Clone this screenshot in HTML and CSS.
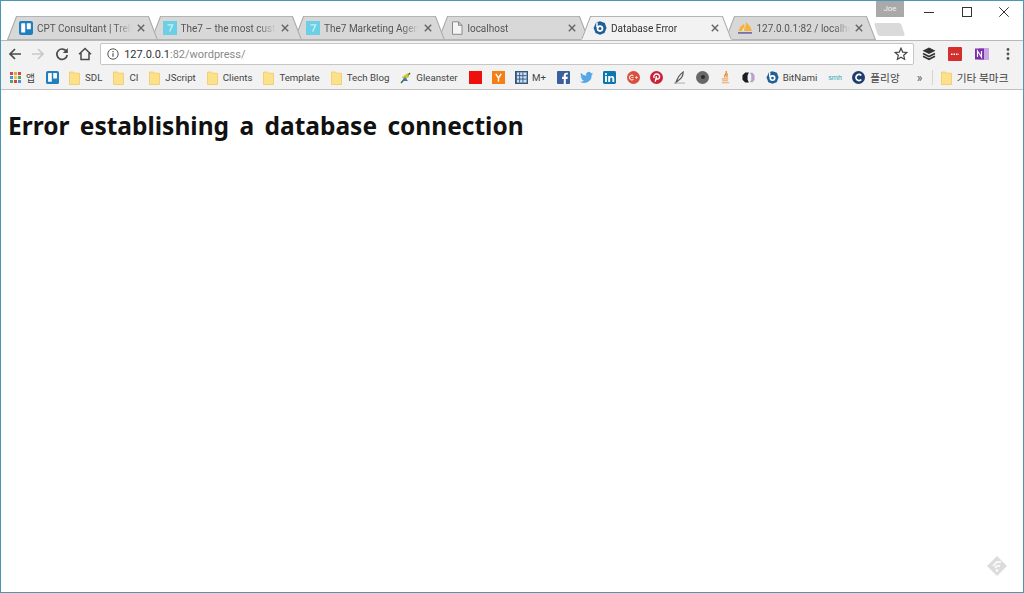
FILE: index.html
```html
<!DOCTYPE html>
<html lang="ko">
<head>
<meta charset="utf-8">
<title>Database Error</title>
<link rel="stylesheet" href="styles.css">
</head>
<body>
<svg class="defs" width="0" height="0" aria-hidden="true">
  <defs>
    <symbol id="trello" viewBox="0 0 14 14"><rect width="14" height="14" rx="2" fill="#1f7fbf"/><rect x="2.2" y="2.2" width="4" height="9.4" rx=".6" fill="#fff"/><rect x="7.8" y="2.2" width="4" height="6" rx=".6" fill="#fff"/></symbol>
    <symbol id="seven" viewBox="0 0 14 14"><rect width="14" height="14" fill="#6bd0e6"/><path d="M4.5 3.8h5.2L6.6 10.6" fill="none" stroke="#c9f0f8" stroke-width="1.300"/></symbol>
    <symbol id="doc" viewBox="0 0 14 14"><path d="M2.5.8h6l3.5 3.5v9h-9.500zM8.500.8v3.500H12" fill="#f4f4f4" stroke="#8a8a8a"/></symbol>
    <symbol id="bitnami" viewBox="0 0 14 14"><path d="M3.200 1.300 7 .3l4.800 1.600L13.500 7l-2 5-4.500 1.700L2.500 12 .6 7z" fill="#1d5f96"/><circle cx="7" cy="7.600" r="3.300" fill="#fff"/><circle cx="7" cy="7.600" r="1.500" fill="#1d5f96"/><rect x="3.200" y="1.300" width="1.500" height="5" fill="#fff"/></symbol>
    <symbol id="folder" viewBox="0 0 11 14"><path d="M.5 1h4l1 1.200h5V13.500H.5z" fill="#fde08a" stroke="#f0ca62" stroke-width=".8"/></symbol>
    <symbol id="pma" viewBox="0 0 16 14"><path d="M1.500 10C2.500 6 5 4 7 3l1 7zM8 10l1-9c2 2 5 5 6 9z" fill="#f6b23e"/><path d="M5 10c.5-1.500 1-2.500 2-3.500V10z" fill="#fce6a8"/><path d="M1 11h14v1.800H1z" fill="#7a6fa8"/></symbol>
  </defs>
</svg>

<div class="window">
  <header class="strip">
    <nav class="tabs">
      <div class="tab">
        <svg class="fav"><use href="#trello"/></svg>
        <span class="title">CPT Consultant | Trello</span>
        <svg class="close" viewBox="0 0 10 10"><path d="M1 1l8 8M9 1l-8 8"/></svg>
      </div>
      <div class="tab">
        <svg class="fav"><use href="#seven"/></svg>
        <span class="title">The7 – the most custom</span>
        <svg class="close" viewBox="0 0 10 10"><path d="M1 1l8 8M9 1l-8 8"/></svg>
      </div>
      <div class="tab">
        <svg class="fav"><use href="#seven"/></svg>
        <span class="title">The7 Marketing Agen</span>
        <svg class="close" viewBox="0 0 10 10"><path d="M1 1l8 8M9 1l-8 8"/></svg>
      </div>
      <div class="tab">
        <svg class="fav"><use href="#doc"/></svg>
        <span class="title">localhost</span>
        <svg class="close" viewBox="0 0 10 10"><path d="M1 1l8 8M9 1l-8 8"/></svg>
      </div>
      <div class="tab active">
        <svg class="fav"><use href="#bitnami"/></svg>
        <span class="title">Database Error</span>
        <svg class="close" viewBox="0 0 10 10"><path d="M1 1l8 8M9 1l-8 8"/></svg>
      </div>
      <div class="tab">
        <svg class="fav wide"><use href="#pma"/></svg>
        <span class="title">127.0.0.1:82 / localho</span>
        <svg class="close" viewBox="0 0 10 10"><path d="M1 1l8 8M9 1l-8 8"/></svg>
      </div>
    </nav>
    <div class="profile-col">
      <div class="profile">Joe</div>
      <div class="newtab"></div>
    </div>
    <div class="caption">
      <svg viewBox="0 0 10 10"><path d="M0 5.500h10"/></svg>
      <svg viewBox="0 0 10 10"><rect x=".5" y=".5" width="9" height="9"/></svg>
      <svg viewBox="0 0 10 10"><path d="M.3.3l9.400 9.400M9.700.3L.3 9.700"/></svg>
    </div>
  </header>

  <div class="toolbar">
    <svg class="nav" viewBox="0 0 14 14"><path d="M13 7H2.500M7 2L2 7l5 5" fill="none" stroke="#4a4a4a" stroke-width="1.700"/></svg>
    <svg class="nav" viewBox="0 0 14 14"><path d="M1 7h10.500M7 2l5 5-5 5" fill="none" stroke="#c9c9c9" stroke-width="1.700"/></svg>
    <svg class="nav" viewBox="0 0 14 14"><path d="M11.500 4.500A5.200 5.200 0 1 0 12.200 8" fill="none" stroke="#4a4a4a" stroke-width="1.700"/><path d="M12.800 1v5h-5z" fill="#4a4a4a"/></svg>
    <svg class="nav" viewBox="0 0 14 14"><path d="M1 7.300L7 1.500l6 5.800M3 6v6.500h8V6" fill="none" stroke="#4a4a4a" stroke-width="1.500"/></svg>
    <div class="omnibox">
      <svg class="info" viewBox="0 0 12 12"><circle cx="6" cy="6" r="5.200" fill="none" stroke="#555" stroke-width="1"/><path d="M6 5.200v3.600M6 3v1.200" stroke="#555" stroke-width="1.200"/></svg>
      <span class="url"><b>127.0.0.1</b>:82/wordpress/</span>
      <svg class="star" viewBox="0 0 14 14"><path d="M7 1.200l1.700 3.900 4.200.4-3.200 2.800.950 4.100L7 10.300l-3.650 2.100.950-4.100L1.100 5.500l4.200-.4z" fill="none" stroke="#444" stroke-width="1.200"/></svg>
    </div>
    <div class="extensions">
      <svg viewBox="0 0 14 14"><path d="M7 .5l6.500 3.200L7 7 .5 3.700z" fill="#333"/><path d="M1 6.500L7 9.500l6-3M1 9.300L7 12.300l6-3" fill="none" stroke="#333" stroke-width="1.600"/></svg>
      <svg viewBox="0 0 14 14"><rect width="14" height="14" rx="1" fill="#d22f2f"/><path d="M3 7.300h8" stroke="#fff" stroke-width="1.500" stroke-dasharray="1.500 1"/></svg>
      <svg viewBox="0 0 14 14"><rect x="4" y="1" width="10" height="12" fill="#c9a6e4"/><rect y="1.500" width="9" height="11" fill="#7b2fa8"/><path d="M2.500 10V4l4 6V4" fill="none" stroke="#fff" stroke-width="1.200"/></svg>
      <svg viewBox="0 0 14 14"><circle cx="7" cy="2.500" r="1.400" fill="#555"/><circle cx="7" cy="7" r="1.400" fill="#555"/><circle cx="7" cy="11.500" r="1.400" fill="#555"/></svg>
    </div>
  </div>

  <div class="bookmarks">
    <div class="bm">
      <svg class="ic11" viewBox="0 0 11 11"><g><rect width="3" height="3" fill="#d9453a"/><rect x="4" width="3" height="3" fill="#e8a33d"/><rect x="8" width="3" height="3" fill="#d9453a"/><rect y="4" width="3" height="3" fill="#4a8fdc"/><rect x="4" y="4" width="3" height="3" fill="#e8c33d"/><rect x="8" y="4" width="3" height="3" fill="#4eaa5c"/><rect y="8" width="3" height="3" fill="#4eaa5c"/><rect x="4" y="8" width="3" height="3" fill="#d9453a"/><rect x="8" y="8" width="3" height="3" fill="#4a8fdc"/></g></svg>
      <span>앱</span>
    </div>
    <div class="bm"><svg class="ic"><use href="#trello"/></svg></div>
    <div class="bm"><svg class="folder"><use href="#folder"/></svg><span>SDL</span></div>
    <div class="bm"><svg class="folder"><use href="#folder"/></svg><span>CI</span></div>
    <div class="bm"><svg class="folder"><use href="#folder"/></svg><span>JScript</span></div>
    <div class="bm"><svg class="folder"><use href="#folder"/></svg><span>Clients</span></div>
    <div class="bm"><svg class="folder"><use href="#folder"/></svg><span>Template</span></div>
    <div class="bm"><svg class="folder"><use href="#folder"/></svg><span>Tech Blog</span></div>
    <div class="bm"><svg class="folder" viewBox="0 0 11 12"><path d="M1 11L10 1" stroke="#3c6e2e" stroke-width="1.500"/><path d="M2 5l6-4 1 4-5 3z" fill="#cfc23a"/><path d="M2 9l3-4 3 4z" fill="#3a78b5"/></svg><span>Gleanster</span></div>
    <div class="bm"><svg class="ic" viewBox="0 0 14 14"><rect width="14" height="14" fill="#ee0f0f"/></svg></div>
    <div class="bm"><svg class="ic" viewBox="0 0 14 14"><rect width="14" height="14" fill="#f47f16"/><path d="M4 3l3 4.500L10 3M7 7.500V11.500" fill="none" stroke="#fff" stroke-width="1.500"/></svg></div>
    <div class="bm"><svg class="ic" viewBox="0 0 14 14"><rect width="14" height="14" fill="#33567f"/><path d="M2 1.500h10.500V12.500H2z" fill="#cfe0ee"/><path d="M5 1.500v11M8.500 1.500v11M2 5h10.500M2 8.700h10.500" stroke="#33567f"/></svg><span>M+</span></div>
    <div class="bm"><svg class="ic" viewBox="0 0 14 14"><rect width="14" height="14" rx="1" fill="#3b5f9a"/><path d="M9.500 14V8.500h1.800l.3-2.200H9.500V5c0-.7.2-1.100 1.100-1.100h1.100V2h-1.600C8.300 2 7.300 3 7.300 4.800v1.500H5.500v2.200h1.800V14z" fill="#fff"/></svg></div>
    <div class="bm"><svg class="ic" viewBox="0 0 14 14"><path d="M14 2.700c-.5.200-1 .4-1.600.4.600-.3 1-.9 1.200-1.500-.5.300-1.100.6-1.800.7A2.800 2.800 0 0 0 7 5.200 8 8 0 0 1 1.100 2.200a2.800 2.800 0 0 0 .9 3.700c-.5 0-.9-.1-1.300-.3 0 1.400 1 2.500 2.300 2.800-.4.100-.8.100-1.300 0 .4 1.100 1.400 1.900 2.600 2A5.700 5.700 0 0 1 0 11.500 8 8 0 0 0 12.500 4.400c.6-.4 1.100-1 1.500-1.700z" fill="#55a8e8"/></svg></div>
    <div class="bm"><svg class="ic" viewBox="0 0 14 14"><rect width="14" height="14" rx="1.500" fill="#0f76ad"/><path d="M2.200 5.500h2V11.800h-2zM3.200 2.200a1.150 1.150 0 1 1 0 2.300 1.150 1.150 0 0 1 0-2.300zM5.600 5.500h1.900v.9c.4-.6 1.100-1.100 2.100-1.100 2 0 2.500 1.300 2.500 3v3.500h-2V8.700c0-.8-.1-1.600-1.100-1.600s-1.300.8-1.300 1.600v3.100h-2.100z" fill="#fff"/></svg></div>
    <div class="bm"><svg class="ic" viewBox="0 0 14 14"><circle cx="7" cy="7" r="7" fill="#d9503f"/><path d="M7 7H4.800M7 5.200A2.500 2.500 0 1 0 7 8.800" fill="none" stroke="#f9dcd6" stroke-width="1.200"/><path d="M10.200 5.500v3M8.700 7h3" stroke="#f9dcd6" stroke-width="1"/></svg></div>
    <div class="bm"><svg class="ic" viewBox="0 0 14 14"><circle cx="7" cy="7" r="7" fill="#cb2039"/><path d="M5.700 11.500L7 5.500M4.400 7.500C3.300 5 5.200 3.300 7.300 3.300c2 0 3.300 1.400 3 3.300-.3 1.800-2.500 2.800-3.600 1.300" fill="none" stroke="#fff" stroke-width="1.500"/></svg></div>
    <div class="bm"><svg class="ic" viewBox="0 0 14 14"><path d="M3 12.500C5 7 8 3 11 1c0 3-2 7-5 9z" fill="none" stroke="#555" stroke-width="1.200"/><path d="M1 13h12" stroke="#aaa"/></svg></div>
    <div class="bm"><svg class="ic" viewBox="0 0 14 14"><circle cx="7" cy="7" r="7" fill="#686868"/><circle cx="7.500" cy="6.500" r="2.200" fill="#2c2c2c"/></svg></div>
    <div class="bm"><svg class="ic" viewBox="0 0 14 14"><path d="M7.500 0c2 3-3 4-1 7M9.500 3c-2 1.500-1 3-.5 4" fill="none" stroke="#ee8a2f" stroke-width="1.400"/><path d="M3 8.500h7M3.500 10.500h6M3 12.700h8" stroke="#e8a76a" stroke-width="1.200"/></svg></div>
    <div class="bm"><svg class="ic" viewBox="0 0 14 14"><path d="M7.500 1.500H3.500L.5 4.500v5l3 3h4L6 9.500v-5z" fill="#1c1c1c"/><path d="M8.500 2h3l2 2.500v5l-2 2.500h-3l1.500-2.500v-5z" fill="#b9a2cf"/></svg></div>
    <div class="bm"><svg class="ic"><use href="#bitnami"/></svg><span class="tight">BitNami</span></div>
    <div class="bm"><span class="smh">smh</span></div>
    <div class="bm"><svg class="ic" viewBox="0 0 14 14"><circle cx="7" cy="7" r="7" fill="#1e3c6e"/><path d="M10 4.800A3.300 3.300 0 1 0 10 9.200" fill="none" stroke="#fff" stroke-width="1.800"/></svg><span class="ko">플리앙</span></div>
    <div class="chevron">»</div>
    <div class="sep"></div>
    <div class="bm"><svg class="folder"><use href="#folder"/></svg><span class="ko">기타 북마크</span></div>
  </div>

  <main class="page">
    <h1>Error establishing a database connection</h1>
  </main>
</div>

<svg class="corner" viewBox="0 0 22 22"><path d="M11 1L21 11 11 21 1 11z" fill="#dcdcdc"/><path d="M7 11l4-4h4M9 13l2-2h3" fill="none" stroke="#fff" stroke-width="1.500"/><circle cx="11" cy="15.500" r="1.200" fill="#fff"/></svg>
</body>
</html>
```
FILE: styles.css
```css
* { box-sizing: border-box; }
html, body { margin: 0; height: 100%; background: #fff; overflow: hidden; }
body { font-family: Roboto, "Noto Sans CJK KR", sans-serif; color: #444; }
.defs { position: absolute; }

.window {
  height: 100vh;
  border: 1px solid #4a97b4;
  display: flex;
  flex-direction: column;
}

/* tab strip */
.strip { display: flex; height: 39px; background: #fff; }
.tabs { display: flex; align-items: flex-end; padding-left: 6px; }
.tab {
  position: relative;
  width: 151px;
  height: 24px;
  margin-right: -7.5px;
  padding: 0 13px 0 12px;
  display: flex;
  align-items: center;
  font-size: 10px;
  color: #555;
}
.tab:nth-child(1) { z-index: 6; }
.tab:nth-child(2) { z-index: 5; }
.tab:nth-child(3) { z-index: 4; }
.tab:nth-child(4) { z-index: 3; }
.tab:nth-child(6) { z-index: 2; }
.tab.active { z-index: 7; color: #333; }
.tab::before, .tab::after {
  content: "";
  position: absolute;
  z-index: -1;
  top: 0;
  bottom: 0;
  width: 60%;
  background: #d8d8d8;
  border-top: 1px solid #b4b4b4;
  border-bottom: 1px solid #b4b4b4;
}
.tab::before {
  left: 0;
  border-left: 1px solid #a6a6a6;
  transform-origin: bottom left;
  transform: skewX(-21deg);
}
.tab::after {
  right: 0;
  border-right: 1px solid #a6a6a6;
  transform-origin: bottom right;
  transform: skewX(21deg);
}
.tab.active::before, .tab.active::after {
  background: #f2f2f2;
  border-bottom-color: #f2f2f2;
}
.fav { width: 14px; height: 14px; flex: none; margin-right: 4px; }
.fav.wide { width: 16px; }
.title {
  flex: 1;
  min-width: 0;
  white-space: nowrap;
  overflow: hidden;
  -webkit-mask-image: linear-gradient(to right, #000 82%, transparent 100%);
  mask-image: linear-gradient(to right, #000 82%, transparent 100%);
}
.close { width: 8px; height: 8px; flex: none; margin-left: 5px; }
.close path { fill: none; stroke: #666; stroke-width: 1.800; }

.profile-col { width: 28px; margin-left: 8px; display: flex; flex-direction: column; flex: none; }
.profile {
  height: 16px;
  background: #a9a9a9;
  color: #f2f2f2;
  font-size: 8px;
  text-align: center;
  line-height: 15px;
}
.newtab {
  width: 27px;
  height: 13px;
  margin-top: 6px;
  background: #dadada;
  border-radius: 2px;
  transform: skewX(18deg);
}
.caption {
  flex: 1;
  display: flex;
  justify-content: flex-end;
  gap: 27.500px;
  padding: 6px 14px 0 0;
}
.caption svg { width: 10px; height: 10px; }
.caption path, .caption rect { fill: none; stroke: #333; stroke-width: 1; }

/* toolbar */
.toolbar {
  display: flex;
  align-items: center;
  height: 26px;
  padding: 1px 0 0 7px;
  gap: 9.300px;
  background: #f2f2f2;
  border-top: 1px solid #b8b8b8;
}
.nav { width: 14px; height: 14px; flex: none; }
.omnibox {
  display: flex;
  align-items: center;
  flex: none;
  width: 814px;
  height: 22px;
  margin-left: -1px;
  background: #fff;
  border: 1px solid #c6c6c6;
  border-radius: 2px;
  padding: 0 5px 0 6px;
  font-size: 11px;
}
.info { width: 12px; height: 12px; flex: none; margin-right: 5px; }
.url { flex: 1; color: #8a8a8a; }
.url b { font-weight: 400; color: #333; }
.star { width: 14px; height: 14px; }
.extensions { display: flex; align-items: center; gap: 12.500px; margin-left: -1.500px; }
.extensions svg { width: 14px; height: 14px; }

/* bookmarks */
.bookmarks {
  display: flex;
  align-items: center;
  height: 24px;
  padding-left: 9px;
  gap: 10.200px;
  background: #f2f2f2;
  border-bottom: 1px solid #c0c0c0;
  font-size: 9.700px;
  color: #444;
  white-space: nowrap;
}
.bm { display: flex; align-items: center; gap: 5px; flex: none; }
.bm span { margin-right: .8px; }
.ic { width: 13px; height: 13px; flex: none; }
.ic + span { margin-left: -1px; }
.ic + .ko { margin-left: 0; }
.ic11 { width: 11px; height: 11px; flex: none; }
.folder { width: 11px; height: 14px; flex: none; }
.bm .smh { width: 13px; margin: 0 .8px 0 0; color: #2ea7b8; font-size: 7px; }
.ko { font-size: 10.700px; }
.chevron { margin-left: 6px; font-size: 12px; color: #555; }
.sep { width: 1px; height: 15px; background: #d4d4d4; margin: 0 -2px 0 -1px; }

/* page */
.page { flex: 1; padding: 8px 7px; background: #fff; }
h1 {
  margin: 10px 0 0;
  font-family: "Noto Sans", "Noto Sans CJK KR", sans-serif;
  font-size: 24.500px;
  font-weight: 700;
  line-height: 36px;
  color: #111;
  word-spacing: 4px;
}
.corner { position: absolute; right: 16px; bottom: 16px; width: 22px; height: 22px; }
```
